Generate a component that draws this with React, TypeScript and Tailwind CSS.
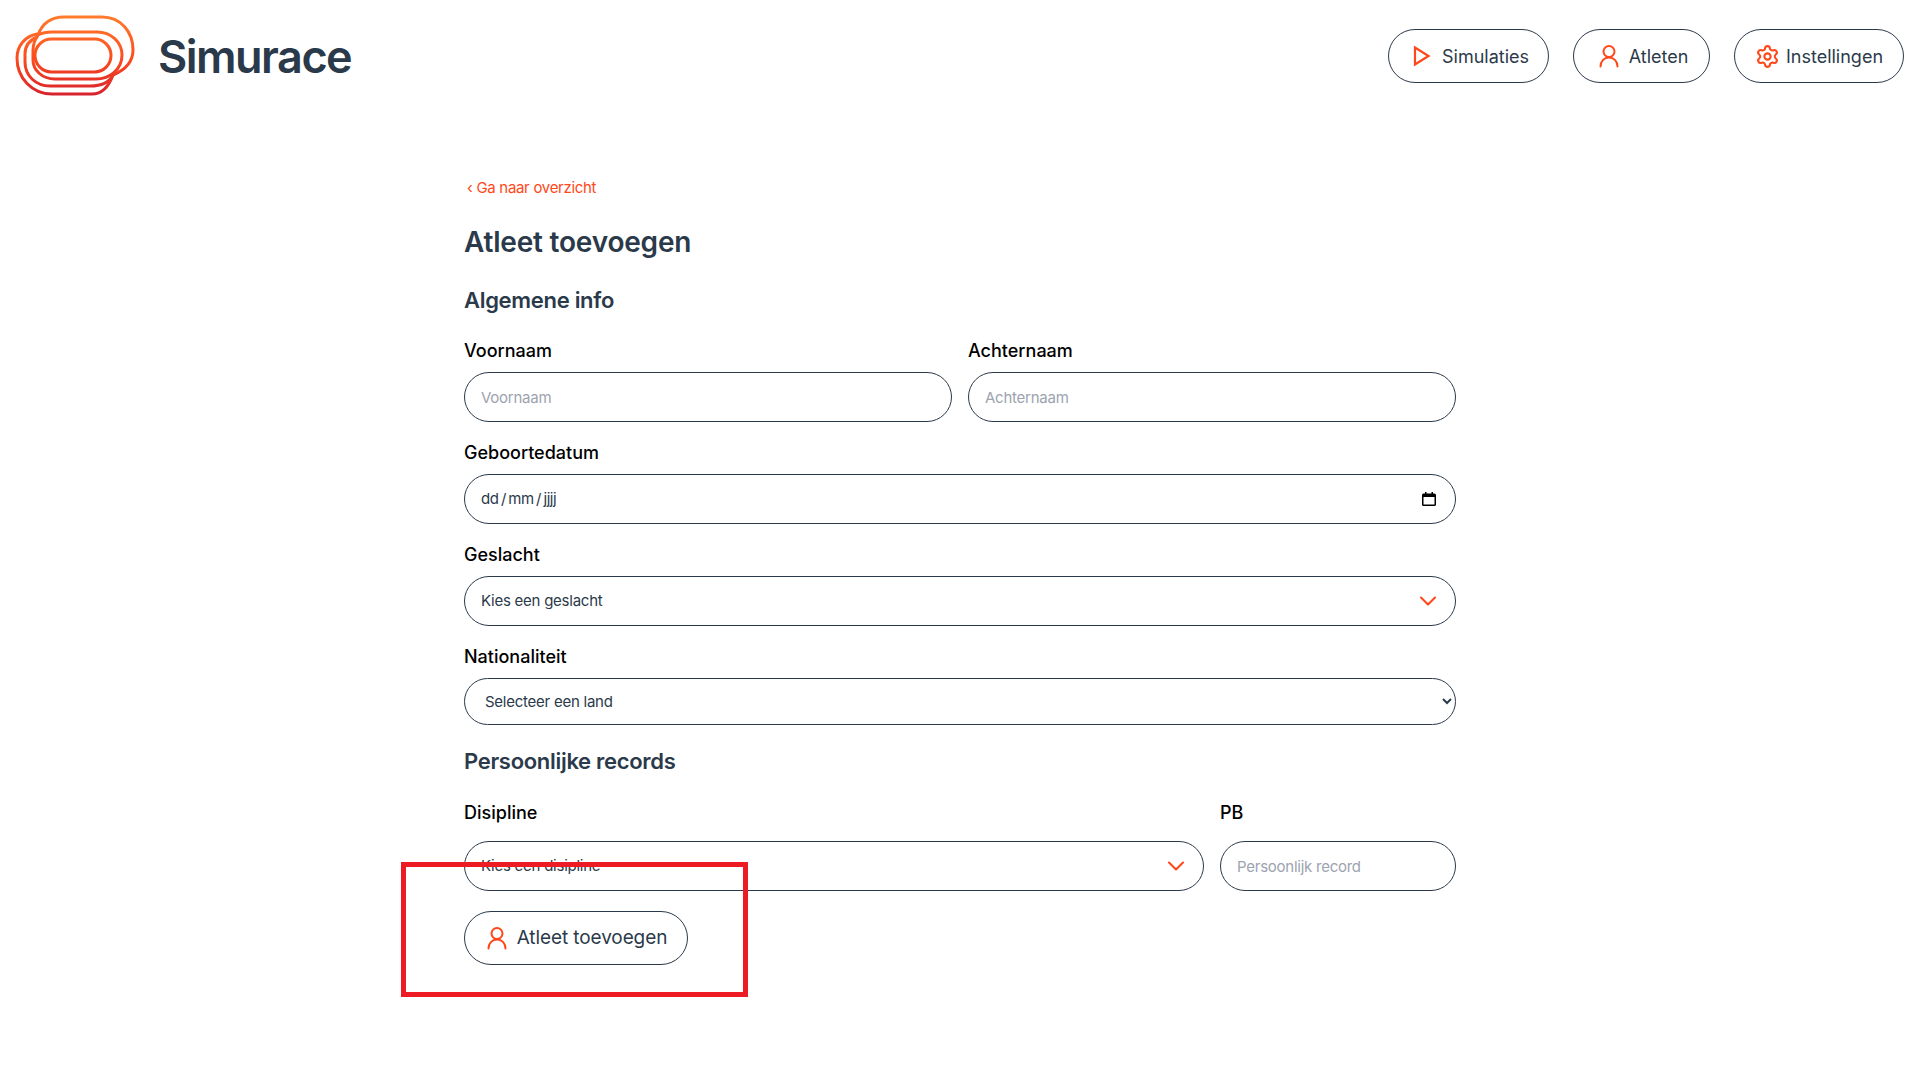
import { ChevronDown, Settings } from "lucide-react";

const font = { fontFamily: "Inter, 'Noto Sans', sans-serif" };

function Logo() {
  return (
    <svg width="130" height="90" viewBox="10 10 130 90" fill="none" className="shrink-0">
      <defs>
        <linearGradient id="logoGrad" gradientUnits="userSpaceOnUse" x1="70" y1="15" x2="70" y2="97">
          <stop offset="0" stopColor="#ff7d2e" />
          <stop offset="0.55" stopColor="#fb4a1e" />
          <stop offset="1" stopColor="#d6202e" />
        </linearGradient>
      </defs>
      <g stroke="url(#logoGrad)" strokeWidth="3" strokeLinecap="round">
        <rect x="35" y="39" width="76" height="33" rx="16.5" />
        <path d="M38 35 C42 33 46 32 52 32 H97 C111 32 122 42 122 55 C122 70 109 79 96 79 H55 C42 79 33 70 33 60 V50 C33 46 34 41 38 35" />
        <path d="M38 35 C42 24 50 17 64 17 H102 C121 17 133 32 133 50 C133 62 125 70 113 75 C109 83 100 86 90 86 H50 C36 86 25 76 25 62 V54 C25 46 30 40 37 37" />
        <path d="M37 34 C25 36 17 46 17 58 C17 78 32 94 52 94 H92 C102 94 109 86 113 75" />
      </g>
    </svg>
  );
}

function PlayIcon() {
  return (
    <svg width="28" height="28" viewBox="0 0 28 28" fill="none" stroke="#ff4719" strokeWidth="2.2">
      <path d="M7 5.5 V22.5 L20.5 14 Z" />
    </svg>
  );
}

function UserIcon() {
  return (
    <svg width="28" height="28" viewBox="0 0 28 28" fill="none" stroke="#ff4719" strokeWidth="2" strokeLinecap="round">
      <circle cx="14" cy="9.5" r="5.5" />
      <path d="M5.5 24.5 C5.5 19.5 9 15.5 14 15.5 S22.5 19.5 22.5 24.5" />
    </svg>
  );
}

function NavButton({ icon, label, width }: { icon: React.ReactNode; label: string; width: string }) {
  return (
    <a className={`flex h-[54px] items-center justify-center gap-[6px] rounded-full border border-[#2b3a4a] text-[18px] text-[#2b3a4a] ${width}`}>
      {icon}
      {label}
    </a>
  );
}

function Field({ label, children, className, gap = "mb-[9px]" }: { label: string; children: React.ReactNode; className?: string; gap?: string }) {
  return (
    <div className={className}>
      <label className={`block h-[25px] text-[18px] leading-[25px] font-[450] text-black ${gap}`}>{label}</label>
      {children}
    </div>
  );
}

const inputClass =
  "block h-[50px] w-full rounded-full border border-[#2b3a4a] bg-white px-[16px] text-[15px] tracking-[-0.25px] text-[#2b3a4a] outline-none placeholder:text-[#9ca3af]";

function PickField({ text }: { text: string }) {
  return (
    <div className={`${inputClass} flex items-center justify-between pr-[13px]`}>
      <span>{text}</span>
      <ChevronDown size={28} strokeWidth={1.8} className="text-[#ff4719]" />
    </div>
  );
}

export default function App() {
  return (
    <div className="relative min-h-[1078px] bg-white" style={font}>
      {/* Header */}
      <header className="flex items-start justify-between pt-[10px] pr-[13px] pl-[10px]">
        <div className="flex items-start gap-[18px]">
          <Logo />
          <span className="mt-[2px] text-[45px] leading-[90px] font-semibold tracking-[-1.5px] text-[#2b3a4a]">Simurace</span>
        </div>
        <nav className="mt-[19px] flex gap-[24px]">
          <NavButton width="w-[161px]" label="Simulaties" icon={<PlayIcon />} />
          <NavButton width="w-[137px]" label="Atleten" icon={<UserIcon />} />
          <NavButton width="w-[170px]" label="Instellingen" icon={<Settings size={25} strokeWidth={2} className="text-[#ff4719]" />} />
        </nav>
      </header>

      <main className="mt-[76px] ml-[464px] w-[992px]">
        <a className="block pl-[3px] text-[15px] leading-[20px] tracking-[-0.3px] text-[#ff4719]">‹ Ga naar overzicht</a>

        <h1 className="mt-[24px] text-[28px] leading-[40px] font-semibold tracking-[-0.2px] text-[#2b3a4a]">Atleet toevoegen</h1>
        <h2 className="mt-[23px] text-[22px] leading-[30px] font-semibold tracking-[-0.3px] text-[#2b3a4a]">Algemene info</h2>

        <div className="mt-[23px] grid grid-cols-2 gap-[16px]">
          <Field label="Voornaam">
            <input className={inputClass} placeholder="Voornaam" />
          </Field>
          <Field label="Achternaam">
            <input className={inputClass} placeholder="Achternaam" />
          </Field>
        </div>

        <Field label="Geboortedatum" className="mt-[18px]">
          <div className={`${inputClass} flex items-center justify-between pr-[19px]`}>
            <span className="tracking-[-0.4px]">dd{"\u2009"}/{"\u2009"}mm{"\u2009"}/{"\u2009"}jjjj</span>
            <svg width="14" height="14" viewBox="0 0 14 14">
              <path d="M3 0h1.5v1.5h5V0H11v1.5h1.5A1.5 1.5 0 0 1 14 3v9.5a1.5 1.5 0 0 1-1.5 1.5h-11A1.5 1.5 0 0 1 0 12.5V3a1.5 1.5 0 0 1 1.5-1.5H3zM1.5 5v7.5h11V5z" fill="#000" />
            </svg>
          </div>
        </Field>

        <Field label="Geslacht" className="mt-[18px]">
          <PickField text="Kies een geslacht" />
        </Field>

        <Field label="Nationaliteit" className="mt-[18px]">
          <select className="block h-[47px] w-full rounded-full border border-[#2b3a4a] bg-white pl-[16px] text-[15px] tracking-[-0.25px] text-[#2b3a4a] outline-none">
            <option>Selecteer een land</option>
          </select>
        </Field>

        <h2 className="mt-[21px] text-[22px] leading-[30px] font-semibold tracking-[-0.3px] text-[#2b3a4a]">Persoonlijke records</h2>

        <div className="mt-[24px] flex gap-[16px]">
          <Field label="Disipline" className="flex-1" gap="mb-[16px]">
            <PickField text="Kies een disipline" />
          </Field>
          <Field label="PB" className="w-[236px]" gap="mb-[16px]">
            <input className={inputClass} placeholder="Persoonlijk record" />
          </Field>
        </div>

        <button className="mt-[20px] flex h-[54px] w-[224px] items-center justify-center gap-[6px] rounded-full border border-[#2b3a4a] pr-[2px] text-[19px] tracking-[-0.1px] text-[#2b3a4a]">
          <UserIcon />
          Atleet toevoegen
        </button>
      </main>

      {/* Annotation frame drawn over the form */}
      <div className="absolute top-[862px] left-[401px] h-[135px] w-[347px] border-[5px] border-[#ed1c24]" />
    </div>
  );
}
